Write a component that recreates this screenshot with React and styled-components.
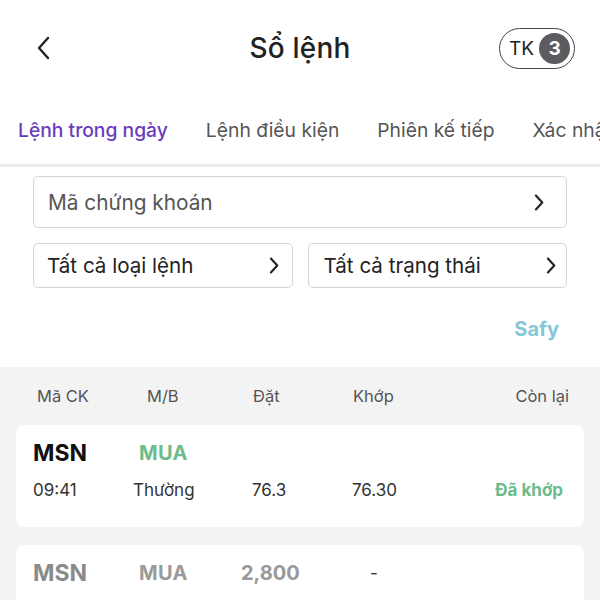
import React from "react";
import styled, { createGlobalStyle } from "styled-components";

const Global = createGlobalStyle`
  html, body { margin: 0; padding: 0; background: #fff; }
  body { font-family: Inter, Roboto, "Noto Sans", sans-serif; color: #222; overflow: hidden; }
  * { box-sizing: border-box; }
`;

const Page = styled.div`
  width: 600px;
  height: 600px;
  display: flex;
  flex-direction: column;
  overflow: hidden;
  & > * { flex-shrink: 0; }
`;

const Header = styled.div`
  height: 100px;
  display: grid;
  grid-template-columns: 1fr auto 1fr;
  align-items: center;
  padding: 0 25px 4px 25px;
`;

const Back = styled.button`
  justify-self: start;
  margin-left: 11px;
  border: 0;
  background: none;
  padding: 0;
  width: 24px;
  height: 28px;
  display: flex;
  align-items: center;
  color: #222;
`;

const Title = styled.h1`
  margin: 0;
  font-size: 28px;
  font-weight: 500;
  color: #222;
  letter-spacing: 0.2px;
`;

const Pill = styled.div`
  justify-self: end;
  height: 41px;
  width: 76px;
  border: 1.5px solid #444;
  border-radius: 21px;
  display: flex;
  align-items: center;
  padding: 0 4px 0 9px;
  gap: 5px;
  font-size: 19px;
  color: #222;
`;

const Badge = styled.span`
  width: 31px;
  height: 31px;
  border-radius: 50%;
  background: #5b5b60;
  color: #fff;
  display: flex;
  align-items: center;
  justify-content: center;
  font-size: 19px;
  font-weight: 700;
`;

const Tabs = styled.div`
  height: 67px;
  display: flex;
  gap: 38px;
  padding-left: 18px;
  border-bottom: 3px solid #ececec;
  white-space: nowrap;
  overflow: hidden;
`;

const Tab = styled.div`
  display: flex;
  align-items: center;
  padding-bottom: 4px;
  font-size: 19.3px;
  color: ${(p) => (p.$active ? "#6a3bbd" : "#555")};
  font-weight: ${(p) => (p.$active ? 500 : 400)};
  position: relative;
  &::after {
    content: "";
    display: ${(p) => (p.$active ? "block" : "none")};
    position: absolute;
    left: -18px;
    right: -19px;
    bottom: -3px;
    height: 3px;
    background: #6a3bbd;
  }
`;

const Filters = styled.div`
  padding: 9px 33px 0;
  display: flex;
  flex-direction: column;
  gap: 15px;
`;

const Row = styled.div`
  display: grid;
  grid-template-columns: 1fr 1fr;
  gap: 15px;
`;

const Select = styled.div`
  height: ${(p) => p.$h}px;
  border: 1.5px solid #d4d4d4;
  border-radius: 5px;
  display: flex;
  align-items: center;
  justify-content: space-between;
  padding: 0 ${(p) => p.$pr}px 0 ${(p) => p.$pl}px;
  font-size: ${(p) => p.$fs}px;
  color: ${(p) => p.$color};
`;

const SafyRow = styled.div`
  display: flex;
  justify-content: flex-end;
  align-items: center;
  padding: 2px 41px 0 0;
  height: 79px;
`;

const Safy = styled.span`
  font-size: 20px;
  font-weight: 700;
  color: #86c6d9;
`;

const Panel = styled.div`
  flex: 1 1 auto;
  background: #f3f3f3;
  padding: 0 16px;
  display: flex;
  flex-direction: column;
  & > * { flex-shrink: 0; }
`;

const Cols = styled.div`
  display: grid;
  grid-template-columns: 110px 106px 100px 1fr auto;
  height: 58px;
  align-items: center;
  padding: 0 15px 0 21px;
  font-size: 16.5px;
  color: #555;
`;

const Card = styled.div`
  background: #fff;
  border-radius: 8px;
  height: ${(p) => p.$h}px;
  margin-bottom: 18px;
  padding: ${(p) => p.$pt}px 21px 0 17px;
  display: flex;
  flex-direction: column;
  gap: 13px;
`;

const Line = styled.div`
  display: grid;
  grid-template-columns: 100px 119px 100px 1fr auto;
  align-items: center;
`;

const Code = styled.span`
  font-size: 23px;
  font-weight: 700;
  color: ${(p) => (p.$muted ? "#8a8a8a" : "#111")};
`;

const Side = styled.span`
  font-size: 20px;
  font-weight: 700;
  letter-spacing: 0.3px;
  color: ${(p) => (p.$muted ? "#9a9a9a" : "#6cbc8b")};
  margin-left: 6px;
`;

const Cell = styled.span`
  font-size: 17px;
  color: #333;
  margin-left: ${(p) => p.$ml || 0}px;
`;

const BigNum = styled.span`
  font-size: 20px;
  font-weight: 700;
  color: #999;
  margin-left: -11px;
`;

const Status = styled.span`
  font-size: 17px;
  font-weight: 700;
  color: #6cbc8b;
  text-align: right;
`;

const Chevron = ({ size = 16, stroke = "#222", w = 2 }) => (
  <svg width={size * 0.6} height={size} viewBox="0 0 9 16" fill="none">
    <path d="M1.5 1.5 L7.5 8 L1.5 14.5" stroke={stroke} strokeWidth={w} strokeLinecap="round" strokeLinejoin="round" />
  </svg>
);

export default function App() {
  return (
    <Page>
      <Global />
      <Header>
        <Back aria-label="Back">
          <svg width="14" height="24" viewBox="0 0 14 24" fill="none">
            <path d="M12 2 L3 12 L12 22" stroke="#222" strokeWidth="2.4" strokeLinecap="round" strokeLinejoin="round" />
          </svg>
        </Back>
        <Title>Sổ lệnh</Title>
        <Pill>
          TK<Badge>3</Badge>
        </Pill>
      </Header>
      <Tabs>
        <Tab $active>Lệnh trong ngày</Tab>
        <Tab>Lệnh điều kiện</Tab>
        <Tab>Phiên kế tiếp</Tab>
        <Tab>Xác nhận lệnh</Tab>
      </Tabs>
      <Filters>
        <Select $h={52} $pl={14} $pr={22} $fs={20.8} $color="#555">
          Mã chứng khoán
          <Chevron size={17} />
        </Select>
        <Row>
          <Select $h={45} $pl={13} $pr={12} $fs={20.6} $color="#222">
            Tất cả loại lệnh
            <Chevron size={17} />
          </Select>
          <Select $h={45} $pl={15} $pr={10} $fs={20.6} $color="#222">
            Tất cả trạng thái
            <Chevron size={17} />
          </Select>
        </Row>
      </Filters>
      <SafyRow>
        <Safy>Safy</Safy>
      </SafyRow>
      <Panel>
        <Cols>
          <span>Mã CK</span>
          <span>M/B</span>
          <span>Đặt</span>
          <span>Khớp</span>
          <span>Còn lại</span>
        </Cols>
        <Card $h={102} $pt={14}>
          <Line>
            <Code>MSN</Code>
            <Side>MUA</Side>
          </Line>
          <Line>
            <Cell>09:41</Cell>
            <Cell>Thường</Cell>
            <Cell>76.3</Cell>
            <Cell>76.30</Cell>
            <Status>Đã khớp</Status>
          </Line>
        </Card>
        <Card $h={80} $pt={14}>
          <Line>
            <Code $muted>MSN</Code>
            <Side $muted>MUA</Side>
            <BigNum>2,800</BigNum>
            <Cell $ml={18}>-</Cell>
          </Line>
        </Card>
      </Panel>
    </Page>
  );
}
